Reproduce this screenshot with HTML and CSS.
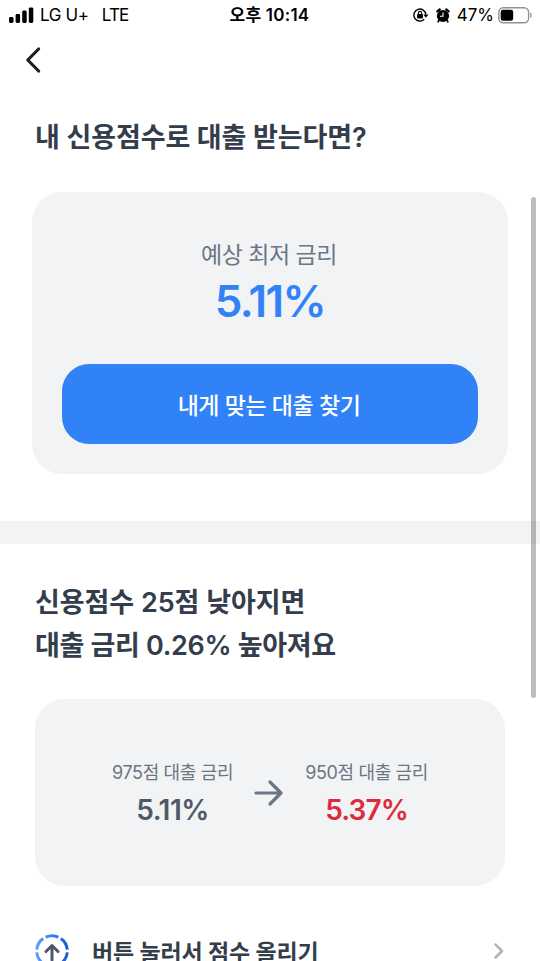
FILE: index.html
```html
<!DOCTYPE html>
<html lang="ko">
<head>
<meta charset="utf-8">
<title>대출 금리</title>
<link rel="stylesheet" href="styles.css">
</head>
<body>
<div class="screen">
  <header class="status">
    <div class="carrier">
      <svg class="signal" width="25" height="16" viewBox="0 0 25 16"><rect x="0" y="10" width="4.5" height="6" rx="1.4"/><rect x="6.6" y="7" width="4.5" height="9" rx="1.4"/><rect x="13.2" y="3.6" width="4.5" height="12.4" rx="1.4"/><rect x="19.8" y="0.4" width="4.5" height="15.6" rx="1.4"/></svg>
      <span class="operator">LG U+</span>
      <span class="network">LTE</span>
    </div>
    <div class="clock">오후 10:14</div>
    <div class="indicators">
      <svg class="lock" width="16" height="14" viewBox="0 0 16 14"><path d="M11.2 11.3A6 6 0 1 1 12.9 6.5" fill="none" stroke="#000" stroke-width="1.4"/><path d="M10.3 6.4h5.2L12.9 9.8z"/><rect x="4.1" y="6.1" width="5.8" height="4.3" rx=".6"/><path d="M5.4 6.5V5a1.6 1.6 0 0 1 3.2 0v1.5" fill="none" stroke="#000" stroke-width="1.1"/></svg>
      <svg class="alarm" width="14" height="15" viewBox="0 0 14 15"><circle cx="7" cy="8" r="6.1"/><path d="M1.4 3.4 3.7 1.5M12.6 3.4 10.3 1.5" stroke="#000" stroke-width="2.3" stroke-linecap="round"/><path d="m3 12.2-.8 1.5m8.8-1.5.8 1.5" stroke="#000" stroke-width="1.8" stroke-linecap="round"/><path d="M7 4.5v3.8H4" fill="none" stroke="#fff" stroke-width="1.1"/></svg>
      <span class="percent">47%</span>
      <svg class="battery" width="35" height="17" viewBox="0 0 35 17"><rect x=".8" y=".8" width="29.8" height="15" rx="4.5" fill="none" stroke="#929292" stroke-width="1.4"/><rect x="2.7" y="2.8" width="12.5" height="11" rx="2.3"/><path d="M32.2 5.5c2 .8 2 4.8 0 5.6z" fill="#999"/></svg>
    </div>
  </header>
  <nav class="nav"><svg width="20" height="30" viewBox="0 0 20 30"><path d="M14.6 4 3.8 15l10.8 11" fill="none" stroke="#191f28" stroke-width="3.2" stroke-linecap="round" stroke-linejoin="round"/></svg></nav>
  <main>
    <section class="offer">
      <h1 class="heading heading-offer">내 신용점수로 대출 받는다면?</h1>
      <div class="card offer-card">
        <p class="offer-label">예상 최저 금리</p>
        <p class="offer-rate">5.11%</p>
        <button class="cta">내게 맞는 대출 찾기</button>
      </div>
    </section>
    <div class="divider"></div>
    <section class="change">
      <h2 class="heading"><span class="line line-one">신용점수 25점 낮아지면</span><span class="line line-two">대출 금리 0.26% 높아져요</span></h2>
      <div class="card compare">
        <div class="rate"><p class="rate-label">975점 대출 금리</p><p class="rate-value">5.11%</p></div>
        <svg class="arrow" width="30" height="28" viewBox="0 0 30 28"><path d="M2 14h25M16 3l11 11-11 11" fill="none" stroke="#6b7684" stroke-width="3.2" stroke-linecap="round" stroke-linejoin="round"/></svg>
        <div class="rate"><p class="rate-label">950점 대출 금리</p><p class="rate-value rate-value-up">5.37%</p></div>
      </div>
      <div class="action">
        <svg class="boost" width="34" height="34" viewBox="0 0 34 34"><defs><linearGradient id="ring" x1="0" y1="0" x2="1" y2="0"><stop offset="0" stop-color="#5aa0fa"/><stop offset=".5" stop-color="#3182f6"/><stop offset="1" stop-color="#1c5acb"/></linearGradient></defs><circle cx="17" cy="17" r="15.3" fill="none" stroke="url(#ring)" stroke-width="3" pathLength="60" stroke-dasharray="8.2 1.8" stroke-dashoffset="-0.9"/><path d="M17 26V12M11 17.5l6-6 6 6" fill="none" stroke="#4e5968" stroke-width="3" stroke-linecap="round" stroke-linejoin="round"/></svg>
        <span class="action-text">버튼 눌러서 점수 올리기</span>
        <svg class="chevron" width="12" height="18" viewBox="0 0 12 18"><path d="m2.5 2.5 6.5 6.5-6.5 6.5" fill="none" stroke="#b0b3b8" stroke-width="2.5" stroke-linecap="round" stroke-linejoin="round"/></svg>
      </div>
    </section>
  </main>
  <div class="scrollbar"></div>
</div>
</body>
</html>
```
FILE: styles.css
```css
* { box-sizing: border-box; margin: 0; padding: 0; }
body { background: #fff; overflow: hidden; font-family: Inter, "Noto Sans CJK KR", sans-serif; color: #333d4b; }
svg { display: block; flex: none; }
p, span, h1, button, .clock { white-space: nowrap; }
.screen { position: relative; height: 961px; overflow: hidden; }
.status { display: grid; grid-template-columns: 1fr auto 1fr; height: 30px; align-items: center; color: #000; padding: 0 7px 0 8px; font-size: 17px; line-height: 30px; }
.carrier, .indicators { display: flex; align-items: center; }
.signal { margin-top: -1px; margin-left: 1px; }
.operator { margin-left: 6px; letter-spacing: -.35px; }
.network { margin-left: 13px; letter-spacing: -.8px; }
.clock { font-weight: 600; font-size: 17px; letter-spacing: .25px; padding-right: 2px; }
.indicators { justify-content: flex-end; }
.alarm { margin-left: 7px; }
.percent { margin-left: 7px; }
.battery { margin-left: 4px; }
.nav { height: 60px; padding: 15px 24px; }
.offer { height: 431px; padding: 26px 32px 0; }
.heading { font-size: 27px; font-weight: 600; line-height: 43px; letter-spacing: -.3px; }
.heading-offer { padding-left: 3px; letter-spacing: -.1px; }
.card { background: #f1f3f5; border-radius: 30px; }
.offer-card { margin-top: 33px; width: 476px; height: 282px; padding: 46px 30px 30px; text-align: center; }
.offer-label { font-size: 23px; line-height: 34px; color: #6b7684; letter-spacing: -.5px; padding-right: 2px; }
.offer-rate { font-size: 44px; line-height: 59px; font-weight: 600; color: #3182f6; letter-spacing: -1.5px; }
.cta { display: block; width: 416px; height: 80px; margin-top: 33px; border: 0; border-radius: 27px; background: #3182f6; color: #fff; font: inherit; font-size: 23px; font-weight: 500; letter-spacing: -.45px; padding-right: 2px; }
.divider { height: 23px; background: #f1f3f5; }
.change { padding: 37px 35px 0; }
.line { display: block; }
.line-one { letter-spacing: -.05px; }
.line-two { letter-spacing: -.33px; }
.compare { width: 470px; height: 187px; margin-top: 32px; display: flex; align-items: center; justify-content: center; gap: 21px; text-align: center; }
.rate { padding-top: 2px; }
.rate-label { font-size: 18px; line-height: 28px; color: #6b7684; letter-spacing: -.35px; padding-top: 2px; }
.rate-value { font-size: 28px; font-weight: 600; line-height: 40px; margin-top: 3px; color: #4e5968; letter-spacing: -.5px; }
.rate-value-up { color: #dc2b3d; letter-spacing: -.9px; }
.action { display: flex; align-items: center; height: 44px; margin-top: 43px; }
.action-text { margin-left: 23px; font-size: 23px; font-weight: 600; letter-spacing: -.2px; }
.chevron { margin-left: auto; }
.scrollbar { position: absolute; right: 4px; top: 197px; width: 5px; height: 501px; border-radius: 3px; background: rgba(0,0,0,.26); }
```
